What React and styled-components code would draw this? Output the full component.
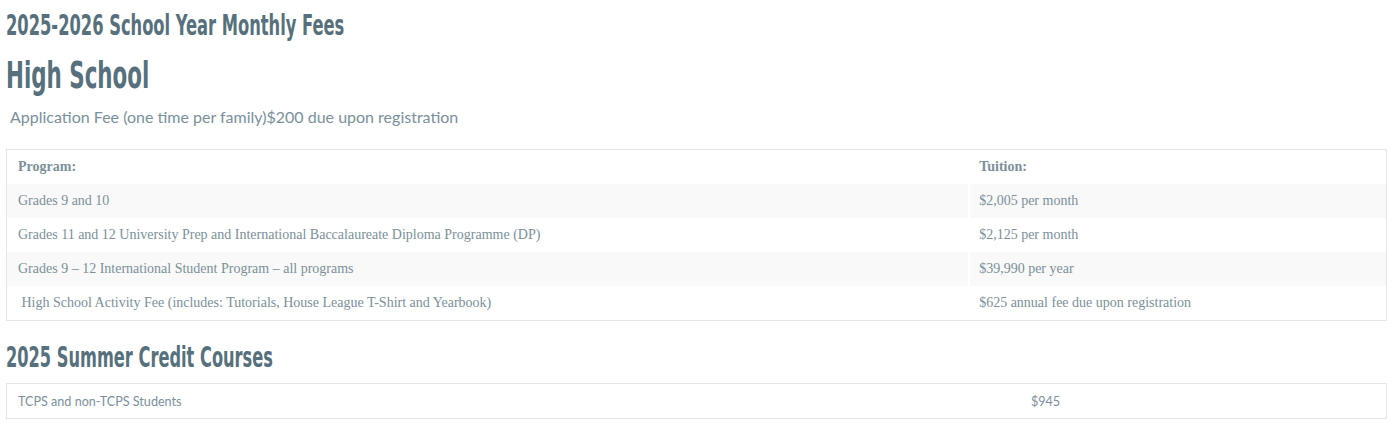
import React from 'react';
import styled, { createGlobalStyle } from 'styled-components';

const GlobalStyle = createGlobalStyle`
  body {
    margin: 0;
    background: #fff;
  }
`;

const Page = styled.div`
  padding: 8px 10px 0 6px;
  font-family: "Lato", sans-serif;
`;

// no Oswald offline, so squeeze a bold sans into the same narrow shape
const Heading = styled.h2`
  margin: ${p => p.$mt || 0}px 0 0 0;
  font-family: "DejaVu Sans Condensed", "Liberation Sans Narrow", "Liberation Sans", sans-serif;
  font-weight: 700;
  font-size: ${p => p.$size}px;
  line-height: ${p => p.$lh}px;
  color: #56707c;
  white-space: nowrap;
  transform: scaleX(${p => p.$sx});
  transform-origin: left center;
`;

const Intro = styled.p`
  margin: 9px 0 0 4px;
  font-size: 16px;
  line-height: 20px;
  color: #7a909b;
`;

const FeeTable = styled.table`
  width: 100%;
  margin-top: ${p => p.$mt}px;
  border: 1px solid #e6e6e6;
  border-collapse: separate;
  border-spacing: 0;
  font-family: ${p => (p.$sans ? '"Lato", sans-serif' : '"Liberation Serif", serif')};
  font-size: ${p => (p.$sans ? 12.6 : 14)}px;
  color: #7b909a;
`;

const Row = styled.tr`
  background: ${p => (p.$striped ? '#f9f9f9' : 'transparent')};
`;

const Cell = styled.td`
  height: 34px;
  padding: 0 10px 0 11px;
  vertical-align: middle;
  font-weight: ${p => (p.$head ? 700 : 400)};
  width: ${p => p.$w || 'auto'};
  & + & {
    border-left: 2px solid #fff;
    padding-left: 9px;
  }
`;

const fees = [
  ['Grades 9 and 10', '$2,005 per month'],
  ['Grades 11 and 12 University Prep and International Baccalaureate Diploma Programme (DP)', '$2,125 per month'],
  ['Grades 9 \u2013 12 International Student Program \u2013 all programs', '$39,990 per year'],
  ['\u00a0High School Activity Fee (includes: Tutorials, House League T-Shirt and Yearbook)', '$625 annual fee due upon registration'],
];

export default function App() {
  return (
    <Page>
      <GlobalStyle />
      <Heading $size={28} $lh={34} $mt={1} $sx={0.647}>2025-2026 School Year Monthly Fees</Heading>
      <Heading as="h1" $size={38} $lh={46} $mt={9} $sx={0.626}>High School</Heading>
      <Intro>Application Fee (one time per family)$200 due upon registration</Intro>

      <FeeTable $mt={22}>
        <tbody>
          <Row>
            <Cell $head $w="69.7%">Program:</Cell>
            <Cell $head>Tuition:</Cell>
          </Row>
          {fees.map(([program, price], i) => (
            <Row key={i} $striped={i % 2 === 0}>
              <Cell>{program}</Cell>
              <Cell>{price}</Cell>
            </Row>
          ))}
        </tbody>
      </FeeTable>

      <Heading $size={28} $lh={34} $mt={20} $sx={0.644}>2025 Summer Credit Courses</Heading>

      <FeeTable $sans $mt={8}>
        <tbody>
          <Row>
            <Cell $w="73.45%">TCPS and non-TCPS Students</Cell>
            <Cell>$945</Cell>
          </Row>
        </tbody>
      </FeeTable>
    </Page>
  );
}
